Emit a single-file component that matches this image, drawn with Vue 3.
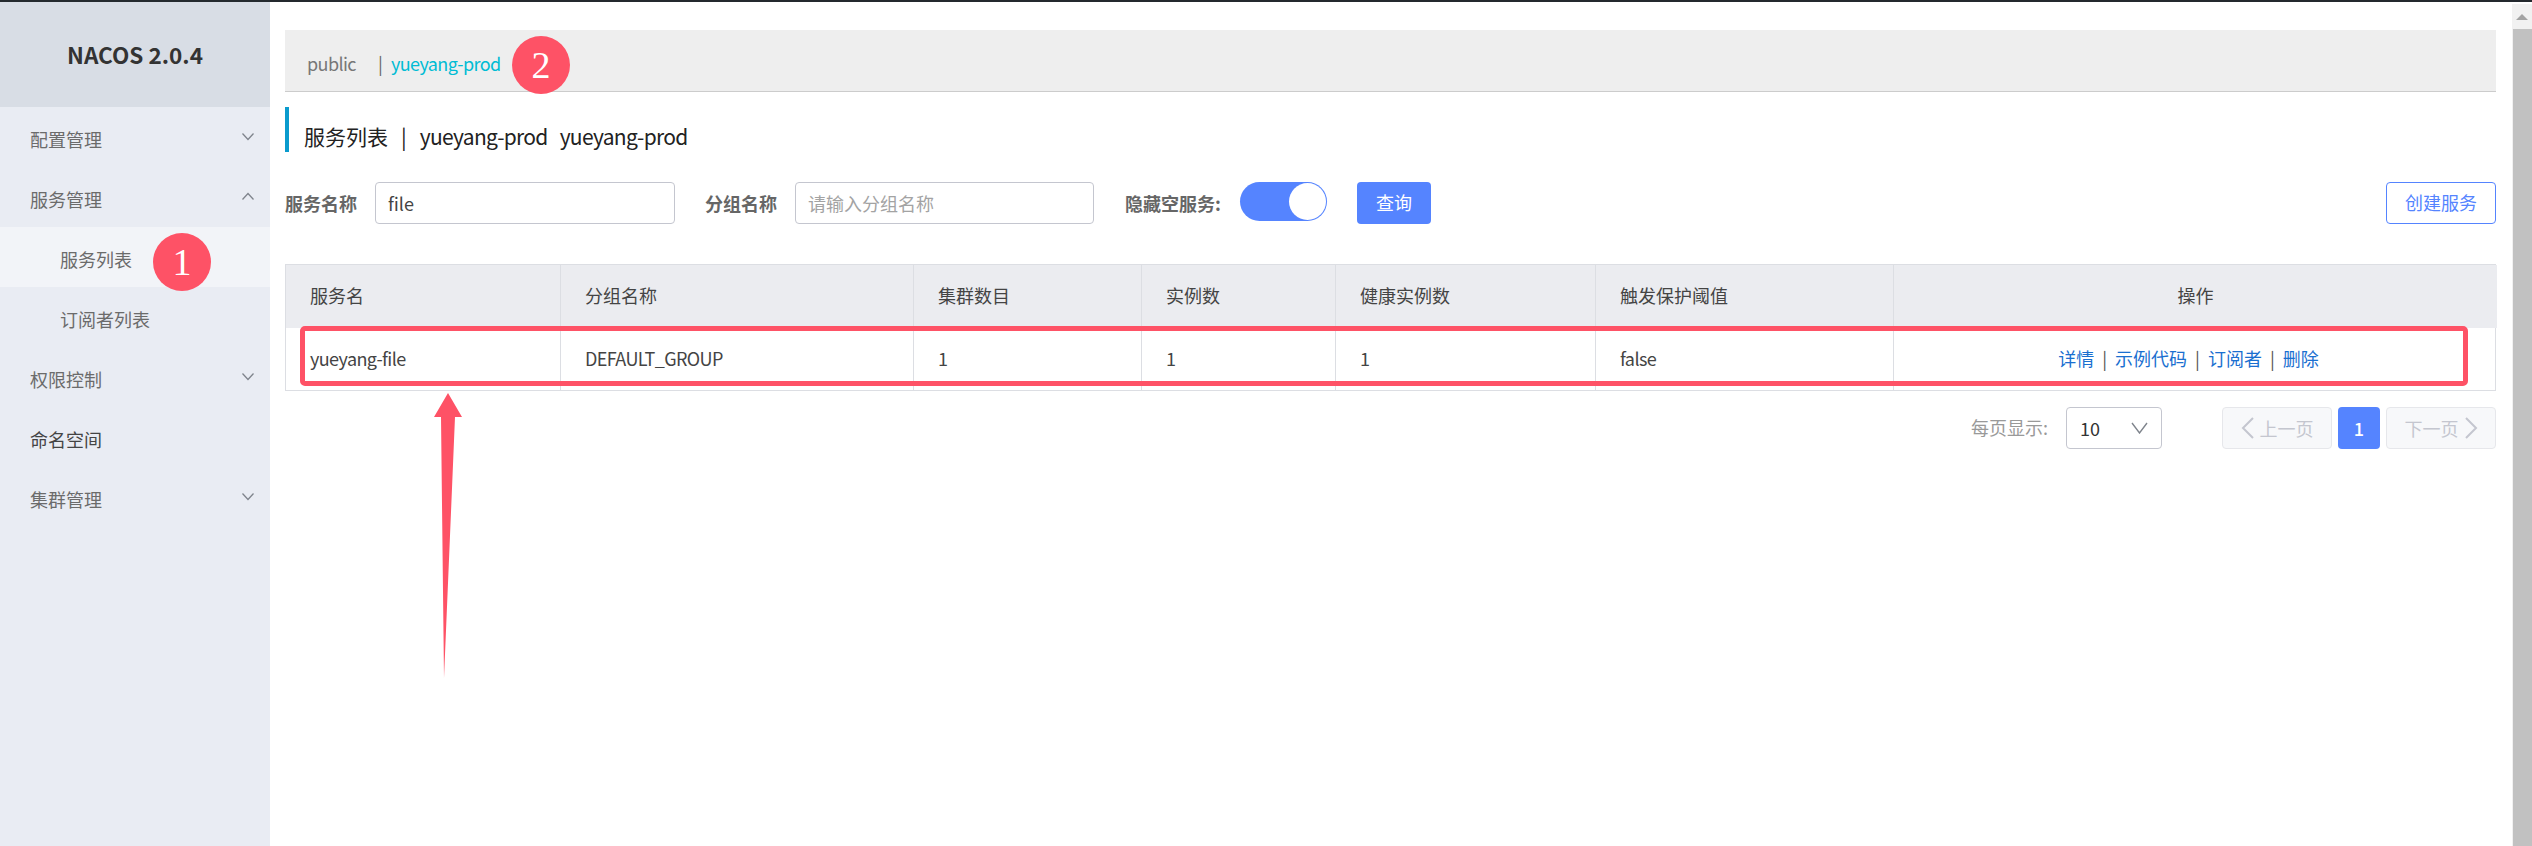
<script setup>
const navItems = [
  { label: '配置管理', chevron: 'down' },
  { label: '服务管理', chevron: 'up' },
  { label: '服务列表', sub: true, active: true },
  { label: '订阅者列表', sub: true },
  { label: '权限控制', chevron: 'down' },
  { label: '命名空间', dark: true },
  { label: '集群管理', chevron: 'down' }
]
const headers = ['服务名', '分组名称', '集群数目', '实例数', '健康实例数', '触发保护阈值', '操作']
const cells = ['yueyang-file', 'DEFAULT_GROUP', '1', '1', '1', 'false']
const links = ['详情', '示例代码', '订阅者', '删除']
</script>

<template>
  <div class="page">
    <div class="topline"></div>
    <div class="shell">
      <aside class="sidebar">
        <div class="brand">NACOS 2.0.4</div>
        <nav>
          <div
            v-for="item in navItems"
            :key="item.label"
            class="nav-item"
            :class="{ sub: item.sub, active: item.active, dark: item.dark }"
          >
            <span>{{ item.label }}</span>
            <svg v-if="item.chevron" class="chev" width="14" height="9" viewBox="0 0 14 9">
              <path v-if="item.chevron === 'down'" d="M1.5 1.5 L7 7.5 L12.5 1.5" />
              <path v-else d="M1.5 7.5 L7 1.5 L12.5 7.5" />
            </svg>
          </div>
        </nav>
      </aside>

      <main class="main">
        <div class="crumbs">
          <span class="ns latin">public</span>
          <span class="sep">|</span>
          <span class="ns-active latin">yueyang-prod</span>
        </div>

        <h1 class="title">
          <span>服务列表</span><span class="bar">|</span><span class="latin-lg">yueyang-prod</span><span class="latin-lg">yueyang-prod</span>
        </h1>

        <div class="filters">
          <label class="lbl lbl-name">服务名称</label>
          <div class="input name-input">file</div>
          <label class="lbl lbl-group">分组名称</label>
          <div class="input group-input placeholder">请输入分组名称</div>
          <label class="lbl lbl-hide">隐藏空服务:</label>
          <div class="toggle"><span class="knob"></span></div>
          <button class="btn primary">查询</button>
          <button class="btn outline">创建服务</button>
        </div>

        <div class="table">
          <div
            v-for="(h, i) in headers"
            :key="h"
            class="cell head"
            :class="{ center: i === 6 }"
          >{{ h }}</div>
          <div v-for="(c, i) in cells" :key="i" class="cell latin">{{ c }}</div>
          <div class="cell center ops">
            <template v-for="(l, i) in links" :key="l">
              <a class="link">{{ l }}</a><span v-if="i < links.length - 1" class="op-sep">|</span>
            </template>
          </div>
        </div>

        <div class="pager">
          <span class="per">每页显示:</span>
          <div class="select">
            <span>10</span>
            <svg width="17" height="12" viewBox="0 0 17 12" class="sel-chev"><path d="M1 1 L8.5 11 L16 1" /></svg>
          </div>
          <div class="page-btn disabled">
            <svg width="13" height="22" viewBox="0 0 13 22"><path d="M12 1 L2 11 L12 21" /></svg>
            <span>上一页</span>
          </div>
          <div class="page-num">1</div>
          <div class="page-btn disabled">
            <span>下一页</span>
            <svg width="13" height="22" viewBox="0 0 13 22"><path d="M1 1 L11 11 L1 21" /></svg>
          </div>
        </div>
      </main>

      <div class="scrollbar">
        <div class="arrow-btn"><span class="tri"></span></div>
        <div class="thumb"></div>
      </div>
    </div>

    <!-- screenshot annotations lying over the UI -->
    <div class="badge badge-1">1</div>
    <div class="badge badge-2">2</div>
    <div class="redbox"></div>
    <svg class="arrow" width="30" height="286" viewBox="0 0 30 286">
      <path d="M15 0 L29 24 L22 24 L11 285 L8 24 L1 24 Z" fill="#fe5266" />
    </svg>
  </div>
</template>

<style>
html, body { margin: 0; background: #fff; overflow: hidden; }
</style>

<style scoped>
.page {
  position: relative;
  width: 2532px;
  height: 846px;
  overflow: hidden;
  font-family: "Noto Sans CJK SC", "Noto Sans", sans-serif;
  font-size: 18px;
  color: #333;
}
.topline { height: 2px; background: #24292e; }
.shell { display: flex; height: 844px; }

.latin { letter-spacing: -0.6px; }
.latin-lg { letter-spacing: -0.7px; }

.sidebar { width: 270px; flex: none; background: #e9ecf3; }
.brand {
  height: 105px;
  padding-bottom: 2px;
  box-sizing: border-box;
  display: flex;
  align-items: center;
  justify-content: center;
  background: #d8dde5;
  color: #333;
  font-weight: 700;
  font-size: 22.5px;
}
.nav-item {
  height: 60px;
  display: flex;
  align-items: center;
  justify-content: space-between;
  padding: 4px 15px 0 30px;
  box-sizing: border-box;
  color: #6b6b6b;
}
.nav-item.sub { padding-left: 60px; }
.nav-item.active { background: #f2f4f8; }
.nav-item.dark { color: #444; }
.chev { margin-bottom: 6px; }
.chev path { fill: none; stroke: #7f848c; stroke-width: 1.3; }

.main { flex: 1; min-width: 0; padding: 28px 16px 0 15px; }

.crumbs {
  height: 62px;
  box-sizing: border-box;
  background: #eeeeee;
  border-bottom: 1px solid #cccccc;
  display: flex;
  align-items: center;
  padding: 4px 0 0 22px;
  font-size: 18px;
}
.ns { color: #777; width: 71px; }
.sep { color: #666; margin-right: 8px; }
.ns-active { color: #00bcd4; }

.title {
  margin: 15px 0 0;
  height: 45px;
  box-sizing: border-box;
  border-left: 4px solid #0a9bcd;
  padding: 12px 0 0 15px;
  display: flex;
  align-items: center;
  gap: 12px;
  font-size: 21px;
  font-weight: 400;
  color: #222;
}
.bar { margin: 0 1px 0 1px; }

.filters {
  margin-top: 30px;
  height: 42px;
  display: flex;
  align-items: center;
}
.lbl { font-weight: 700; color: #666; font-size: 18px; }
.lbl-name { width: 72px; margin-right: 18px; white-space: nowrap; }
.lbl-group { width: 72px; margin: 0 18px 0 30px; white-space: nowrap; }
.lbl-hide { width: 96px; margin: 0 19px 0 31px; white-space: nowrap; }
.input {
  height: 42px;
  box-sizing: border-box;
  border: 1px solid #c4c6cf;
  border-radius: 4px;
  padding-left: 12px;
  display: flex;
  align-items: center;
  color: #444;
}
.name-input { width: 300px; }
.group-input { width: 299px; }
.group-input.placeholder { color: #a3a3a3; }
.toggle {
  width: 87px;
  height: 39px;
  margin-bottom: 3px;
  box-sizing: border-box;
  background: #5584ff;
  border-radius: 20px;
  position: relative;
}
.knob {
  position: absolute;
  right: 1px;
  top: 1px;
  width: 37px;
  height: 37px;
  background: #fff;
  border-radius: 50%;
}
.btn {
  height: 42px;
  box-sizing: border-box;
  border-radius: 4px;
  font: inherit;
  font-size: 18px;
  padding: 0 0 2px;
}
.primary {
  width: 74px;
  margin-left: 30px;
  border: 0;
  background: #5584ff;
  color: #fff;
}
.outline {
  width: 110px;
  margin-left: auto;
  border: 1px solid #5584ff;
  background: #fff;
  color: #5584ff;
}

.table {
  margin-top: 40px;
  display: grid;
  grid-template-columns: 275px 353px 228px 194px 260px 298px 603px;
  grid-template-rows: 63px 62px;
  border: 1px solid #dcdee3;
  box-sizing: border-box;
  width: 2211px;
}
.cell {
  display: flex;
  align-items: center;
  padding: 0 0 3px 24px;
  border-right: 1px solid #dcdee3;
  box-sizing: border-box;
  color: #444;
}
.cell:nth-child(7n) { border-right: 0; }
.head { background: #ebecf0; }
.center { justify-content: center; padding-left: 0; }
.ops { padding-right: 14px; }
.link { color: #1a6fd0; }
.op-sep { color: #555; margin: 0 8px; }

.pager {
  margin-top: 16px;
  height: 42px;
  display: flex;
  align-items: center;
  justify-content: flex-end;
}
.per { color: #999; margin-right: 18px; padding-bottom: 3px; }
.select {
  width: 96px;
  height: 42px;
  box-sizing: border-box;
  border: 1px solid #c4c6cf;
  border-radius: 4px;
  display: flex;
  align-items: center;
  justify-content: space-between;
  padding: 0 13px;
  margin-right: 60px;
}
.sel-chev path { fill: none; stroke: #7f848c; stroke-width: 1.4; }
.page-btn {
  width: 110px;
  height: 42px;
  box-sizing: border-box;
  border: 1px solid #e6e7eb;
  border-radius: 4px;
  background: #f7f8fa;
  color: #c4c6cf;
  display: flex;
  align-items: center;
  justify-content: center;
  gap: 6px;
}
.page-btn path { fill: none; stroke: #c4c6cf; stroke-width: 2; }
.page-num {
  width: 42px;
  height: 42px;
  margin: 0 6px;
  border-radius: 4px;
  background: #5584ff;
  color: #fff;
  display: flex;
  align-items: center;
  justify-content: center;
  font-weight: 500;
}

.scrollbar { width: 20px; flex: none; background: #f1f1f1; margin-top: 2px; display: flex; flex-direction: column; }
.arrow-btn { height: 25px; display: flex; align-items: center; justify-content: center; }
.tri {
  width: 0;
  height: 0;
  border-left: 6px solid transparent;
  border-right: 6px solid transparent;
  border-bottom: 6px solid #a3a3a3;
}
.thumb { flex: 1; background: #c1c1c1; margin-left: 1px; }

.badge {
  position: absolute;
  width: 58px;
  height: 58px;
  border-radius: 50%;
  background: #fe5266;
  color: #fff;
  font-family: "Liberation Serif", serif;
  font-size: 38px;
  display: flex;
  align-items: center;
  justify-content: center;
}
.badge-1 { left: 153px; top: 233px; }
.badge-2 { left: 512px; top: 36px; }
.redbox {
  position: absolute;
  left: 300px;
  top: 326px;
  width: 2168px;
  height: 60px;
  box-sizing: border-box;
  border: 5px solid #fe5266;
  border-radius: 5px;
}
.arrow { position: absolute; left: 433px; top: 393px; }
</style>
